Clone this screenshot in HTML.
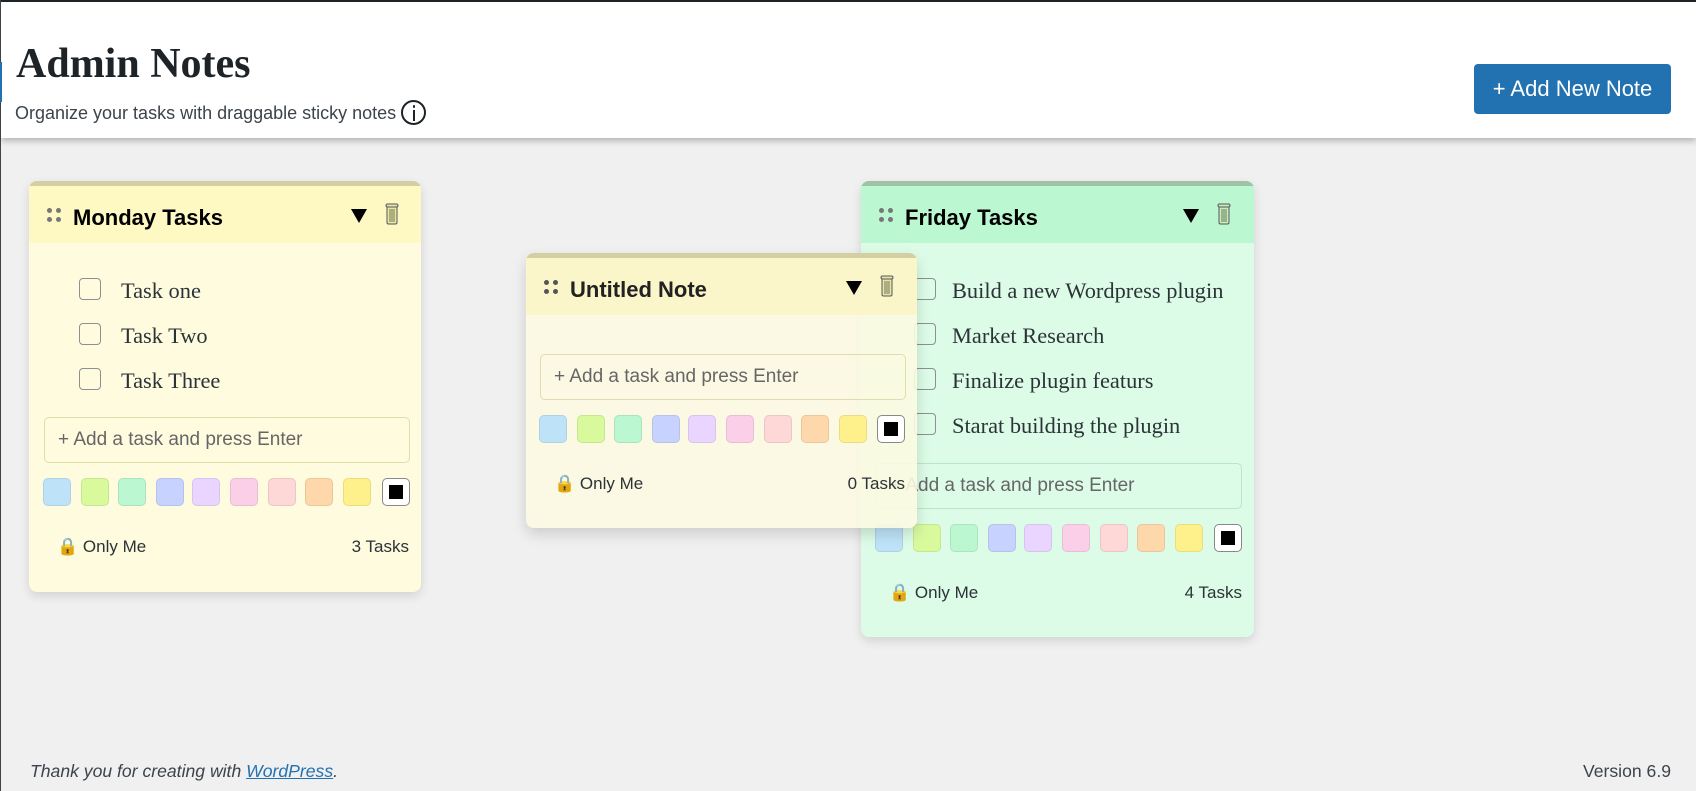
<!DOCTYPE html>
<html><head><meta charset="utf-8"><style>
*{box-sizing:border-box;margin:0;padding:0}
body{width:1696px;height:791px;background:#f0f0f0;font-family:"Liberation Sans",sans-serif;position:relative;overflow:hidden;color:#1d2327}
.topbar{position:absolute;left:0;top:0;width:1696px;height:2px;background:#1d2327}
.lb{position:absolute;left:0;top:0;width:1px;height:791px;background:#3c434a}
.hdr{position:absolute;left:1px;top:2px;width:1695px;height:136px;background:#fff;box-shadow:0 3px 6px rgba(0,0,0,.25)}
h1{position:absolute;left:16px;top:40px;font-family:"Liberation Serif",serif;font-weight:bold;font-size:42px;color:#1d2327}
.sub{position:absolute;left:15px;top:100px;font-size:18px;color:#3c434a}
.info{display:inline-block;width:25px;height:25px;border:2px solid #1d2327;border-radius:50%;vertical-align:-6px;margin-left:5px;position:relative}
.info:before{content:"";position:absolute;left:9.5px;top:3px;width:2.5px;height:2.5px;background:#1d2327;border-radius:50%}
.info:after{content:"";position:absolute;left:9.8px;top:8px;width:2px;height:11px;background:#1d2327}
.btn{position:absolute;left:1474px;top:64px;width:197px;height:50px;background:#2271b1;border-radius:4px;color:#fff;font-size:22px;line-height:50px;text-align:center}
.note{position:absolute;border-radius:8px;box-shadow:0 4px 10px rgba(0,0,0,.12);overflow:hidden}
.nh{position:absolute;left:0;top:0;right:0;height:62px;border-top:5px solid}
.dots{position:absolute;left:18px;top:20px;width:14px;height:14px}
.dots i{position:absolute;width:5px;height:5px;border-radius:50%;background:#777}
.ttl{position:absolute;left:44px;top:18px;font-weight:bold;font-size:22px;color:#000}
.tri{position:absolute;top:22px;width:0;height:0;border-left:8px solid transparent;border-right:8px solid transparent;border-top:14px solid #000}
.trash{position:absolute;top:16px;width:14px;height:22px}
.task{position:absolute;font-family:"Liberation Serif",serif;font-size:22.4px;color:#2c3338}
.cb{position:absolute;width:22px;height:22px;border:1.5px solid #8c8f94;border-radius:4px}
.inp{position:absolute;height:46px;border:1.5px solid #e0dcb0;border-radius:5px;font-size:19px;color:#666;padding:11px 13px}
.sw{position:absolute;width:28px;height:28px;border-radius:5px;border:1px solid rgba(0,0,0,.08)}
.sw.k{background:#fff;border:1.5px solid #888}
.sw.k:after{content:"";position:absolute;left:6px;top:6px;width:14px;height:14px;background:#000}
.ft{position:absolute;font-size:17px;color:#2c3338}
.foot{position:absolute;top:761px;font-size:17.6px;color:#3c434a}
</style></head><body>
<div class="hdr"></div>
<div class="topbar"></div><div class="lb"></div>
<div style="position:absolute;left:0;top:62px;width:2px;height:40px;background:#2271b1"></div>
<h1>Admin Notes</h1>
<div class="sub">Organize your tasks with draggable sticky notes<span class="info"></span></div>
<div class="btn">+ Add New Note</div>

<!-- Monday -->
<div class="note" style="left:29px;top:181px;width:392px;height:411px;background:#fefbdf">
 <div class="nh" style="background:#fef8c3;border-color:#d3cfa2"></div>
 <div class="dots" style="top:27px"><i style="left:0;top:0"></i><i style="left:9px;top:0"></i><i style="left:0;top:9px"></i><i style="left:9px;top:9px"></i></div>
 <div class="ttl" style="top:24px">Monday Tasks</div>
 <div class="tri" style="left:322px;top:28px"></div>
 <svg class="trash" style="left:356px;top:22px" viewBox="0 0 14 22"><rect x="2" y="3" width="10" height="18" rx="1.5" fill="#e8e89a" stroke="#556" stroke-width="1"/><rect x="1" y="1" width="12" height="3" rx="1.5" fill="#e8e89a" stroke="#556"/><path d="M5 6v13M7 6v13M9 6v13" stroke="#556" stroke-width=".8"/></svg>
 <div class="cb" style="left:50px;top:97px"></div><div class="task" style="left:92px;top:97px">Task one</div>
 <div class="cb" style="left:50px;top:142px"></div><div class="task" style="left:92px;top:142px">Task Two</div>
 <div class="cb" style="left:50px;top:187px"></div><div class="task" style="left:92px;top:187px">Task Three</div>
 <div class="inp" style="left:15px;top:236px;width:366px">+ Add a task and press Enter</div>
 <div class="sw" style="left:14px;top:297px;background:#bee3f8"></div><div class="sw" style="left:52px;top:297px;background:#d9f99d"></div><div class="sw" style="left:89px;top:297px;background:#bbf7d0"></div><div class="sw" style="left:127px;top:297px;background:#c7d2fe"></div><div class="sw" style="left:163px;top:297px;background:#e9d5ff"></div><div class="sw" style="left:201px;top:297px;background:#fbcfe8"></div><div class="sw" style="left:239px;top:297px;background:#fed7d7"></div><div class="sw" style="left:276px;top:297px;background:#fed7aa"></div><div class="sw" style="left:314px;top:297px;background:#fef08a"></div><div class="sw k" style="left:353px;top:297px"></div>
 <div class="ft" style="left:28px;top:356px">🔒 Only Me</div><div class="ft" style="right:12px;top:356px">3 Tasks</div>
</div>

<!-- Friday -->
<div class="note" style="left:861px;top:181px;width:393px;height:456px;background:#dcfce7">
 <div class="nh" style="background:#bbf7d0;border-color:#9ec3a5"></div>
 <div class="dots" style="top:27px"><i style="left:0;top:0"></i><i style="left:9px;top:0"></i><i style="left:0;top:9px"></i><i style="left:9px;top:9px"></i></div>
 <div class="ttl" style="top:24px">Friday Tasks</div>
 <div class="tri" style="left:322px;top:28px"></div>
 <svg class="trash" style="left:356px;top:22px" viewBox="0 0 14 22"><rect x="2" y="3" width="10" height="18" rx="1.5" fill="#c8efb0" stroke="#556" stroke-width="1"/><rect x="1" y="1" width="12" height="3" rx="1.5" fill="#c8efb0" stroke="#556"/><path d="M5 6v13M7 6v13M9 6v13" stroke="#556" stroke-width=".8"/></svg>
 <div class="cb" style="left:53px;top:97px"></div><div class="task" style="left:91px;top:97px">Build a new Wordpress plugin</div>
 <div class="cb" style="left:53px;top:142px"></div><div class="task" style="left:91px;top:142px">Market Research</div>
 <div class="cb" style="left:53px;top:187px"></div><div class="task" style="left:91px;top:187px">Finalize plugin featurs</div>
 <div class="cb" style="left:53px;top:232px"></div><div class="task" style="left:91px;top:232px">Starat building the plugin</div>
 <div class="inp" style="left:15px;top:282px;width:366px;border-color:#b9e6c5">+ Add a task and press Enter</div>
 <div class="sw" style="left:14px;top:343px;background:#bee3f8"></div><div class="sw" style="left:52px;top:343px;background:#d9f99d"></div><div class="sw" style="left:89px;top:343px;background:#bbf7d0"></div><div class="sw" style="left:127px;top:343px;background:#c7d2fe"></div><div class="sw" style="left:163px;top:343px;background:#e9d5ff"></div><div class="sw" style="left:201px;top:343px;background:#fbcfe8"></div><div class="sw" style="left:239px;top:343px;background:#fed7d7"></div><div class="sw" style="left:276px;top:343px;background:#fed7aa"></div><div class="sw" style="left:314px;top:343px;background:#fef08a"></div><div class="sw k" style="left:353px;top:343px"></div>
 <div class="ft" style="left:28px;top:402px">🔒 Only Me</div><div class="ft" style="right:12px;top:402px">4 Tasks</div>
</div>

<!-- Untitled (semi-transparent) -->
<div class="note" style="left:526px;top:253px;width:391px;height:275px;background:rgba(252,250,225,.9);box-shadow:0 6px 14px rgba(0,0,0,.15)">
 <div class="nh" style="background:rgba(250,245,200,.95);border-color:#d3cfa2"></div>
 <div class="dots" style="top:27px"><i style="left:0;top:0;background:#555"></i><i style="left:9px;top:0;background:#555"></i><i style="left:0;top:9px;background:#555"></i><i style="left:9px;top:9px;background:#555"></i></div>
 <div class="ttl" style="top:24px;color:#222">Untitled Note</div>
 <div class="tri" style="left:320px;top:28px"></div>
 <svg class="trash" style="left:354px;top:22px" viewBox="0 0 14 22"><rect x="2" y="3" width="10" height="18" rx="1.5" fill="#e8e89a" stroke="#556" stroke-width="1"/><rect x="1" y="1" width="12" height="3" rx="1.5" fill="#e8e89a" stroke="#556"/><path d="M5 6v13M7 6v13M9 6v13" stroke="#556" stroke-width=".8"/></svg>
 <div class="inp" style="left:14px;top:101px;width:366px">+ Add a task and press Enter</div>
 <div class="sw" style="left:13px;top:162px;background:#bee3f8"></div><div class="sw" style="left:51px;top:162px;background:#d9f99d"></div><div class="sw" style="left:88px;top:162px;background:#bbf7d0"></div><div class="sw" style="left:126px;top:162px;background:#c7d2fe"></div><div class="sw" style="left:162px;top:162px;background:#e9d5ff"></div><div class="sw" style="left:200px;top:162px;background:#fbcfe8"></div><div class="sw" style="left:238px;top:162px;background:#fed7d7"></div><div class="sw" style="left:275px;top:162px;background:#fed7aa"></div><div class="sw" style="left:313px;top:162px;background:#fef08a"></div><div class="sw k" style="left:351px;top:162px"></div>
 <div class="ft" style="left:28px;top:221px">🔒 Only Me</div><div class="ft" style="right:12px;top:221px">0 Tasks</div>
</div>

<div class="foot" style="left:30px;font-style:italic">Thank you for creating with <span style="color:#2271b1;text-decoration:underline">WordPress</span>.</div>
<div class="foot" style="right:25px">Version 6.9</div>
</body></html>
